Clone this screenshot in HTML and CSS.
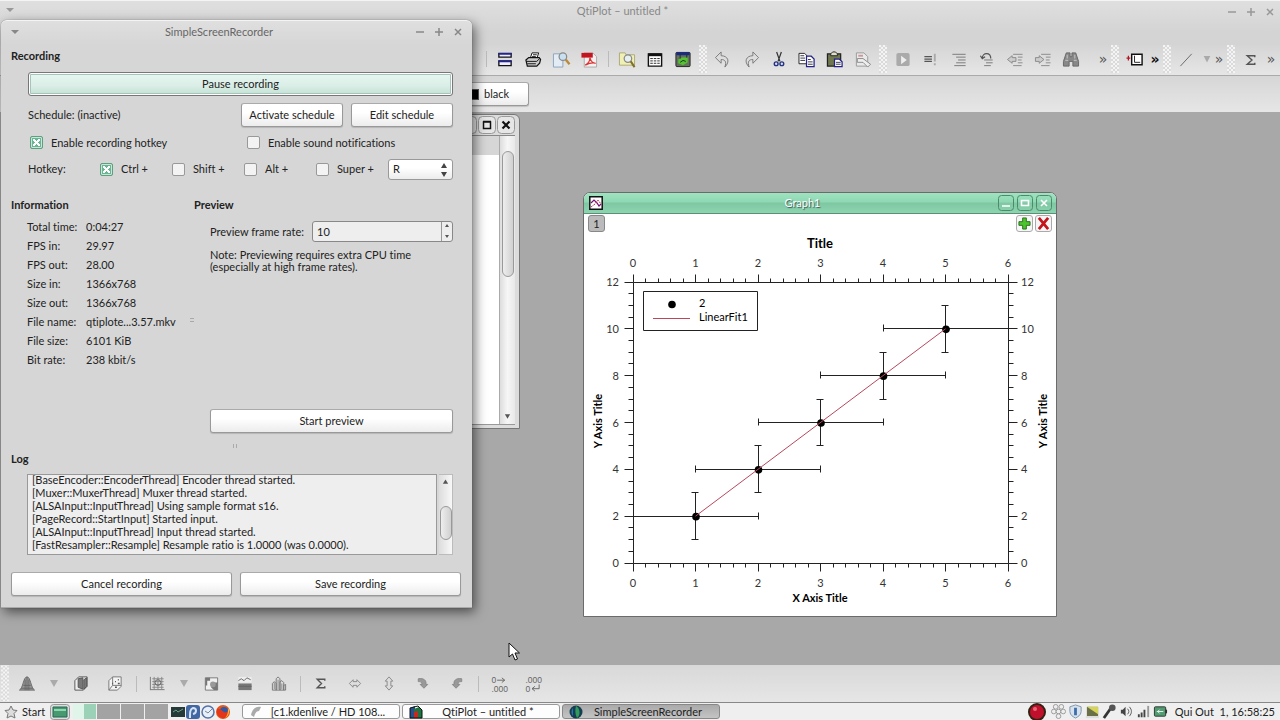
FILE: index.html
```html
<!DOCTYPE html>
<html lang="en">
<head>
    <meta charset="UTF-8">
    <meta name="viewport" content="width=device-width, initial-scale=1.0">
    <title>QtiPlot - untitled *</title>
    <link rel="stylesheet" href="styles.css">
    <script src="plot.js" defer></script>
</head>
<body>
    <div class="titlebar main-title">
        <svg class="arrow" viewBox="0 0 8 6"><path d="M0 1h8L4 5z"/></svg>
        <span class="caption">QtiPlot – untitled *</span>
        <span class="controls">
            <svg viewBox="0 0 10 10"><path d="M1 5h8"/></svg>
            <svg viewBox="0 0 10 10"><path d="M1 5h8M5 1v8"/></svg>
            <svg viewBox="0 0 10 10"><path d="M2 2l6 6M8 2L2 8"/></svg>
        </span>
    </div>

    <div class="toolbar top-tools">
        <span class="sep"></span>
        <svg class="tool" viewBox="0 0 18 18"><path d="M2.5 2.5h13v4h-13zM2.5 10.5h13v5h-13z" fill="#eef" stroke="#111" stroke-width="1.4"/><path d="M2 3h14M2 11h14" stroke="#229" stroke-width="2"/></svg>
        <svg class="tool" viewBox="0 0 18 18"><path d="M6 8l2-6h7l-2 6" fill="#fff" stroke="#111"/><path d="M1.500 9.500l3-2.500h11l1.500 2-1 4-3 3h-10z" fill="#ccc" stroke="#111" stroke-width="1.300"/><path d="M2 11h11l3-3M3 13.500h9M9 4h4M8 6h4" stroke="#111" fill="none"/></svg>
        <svg class="tool" viewBox="0 0 18 18"><path d="M1 3h7l3 3v11H1z" fill="#e3ecf5" stroke="#8aa3bd"/><circle cx="11" cy="6" r="4" fill="#c7e0f2" stroke="#888" stroke-width="1.3"/><path d="M14 9l4 5" stroke="#bb8b3c" stroke-width="2.500"/></svg>
        <svg class="tool" viewBox="0 0 18 18"><path d="M4 2h9l4 4v11H4z" fill="#f4f0f0" stroke="#aaa"/><path d="M1 2h12v5H1z" fill="#c41420"/><path d="M5 15c4-2 5-6 5-8 1 4 3 6 6 6-4-1-7 0-11 2z" fill="none" stroke="#d33" stroke-width="1.300"/></svg>
        <span class="sep"></span>
        <svg class="tool" viewBox="0 0 18 18"><path d="M1 2h6l1 2h9v11H1z" fill="#f0f0b4" stroke="#aaa976"/><circle cx="10" cy="8" r="4" fill="#e6eef0" stroke="#888" stroke-width="1.300"/><path d="M13 11l4 6" stroke="#80702a" stroke-width="2.200"/></svg>
        <svg class="tool" viewBox="0 0 18 18"><path d="M2 3h14v13H2z" fill="#fff" stroke="#111" stroke-width="1.500"/><path d="M2 4h14" stroke="#111" stroke-width="3"/><path d="M4 8h10M4 10.500h10M4 13h10" stroke="#222" stroke-dasharray="2.700 1"/></svg>
        <svg class="tool" viewBox="0 0 18 18"><rect x="1.500" y="1.500" width="15" height="15" rx="1" fill="#66705e" stroke="#222"/><path d="M2 3h14" stroke="#1a2a8a" stroke-width="3"/><path d="M4 9l4-2 6 0v5l-5 3-5-2z" fill="#55c133"/><path d="M6 12l3-2 3 1M6 4v4M13 4v3" stroke="#17351a" fill="none"/></svg>
        <span class="grip"></span>
        <svg class="tool" viewBox="0 0 18 18"><path d="M1 7l6-6v4c7 0 10 6 4 12 2-6 0-8-4-8v4z" fill="#ddd" stroke="#777"/></svg>
        <svg class="tool" viewBox="0 0 18 18"><path d="M17 7l-6-6v4C4 5 1 11 7 17 5 11 7 9 11 9v4z" fill="#ddd" stroke="#777"/></svg>
        <svg class="tool" viewBox="0 0 18 18"><path d="M6.500 1l3.500 10M11.500 1L8 11" stroke="#333" stroke-width="1.300"/><circle cx="6" cy="13.500" r="2" fill="none" stroke="#238" stroke-width="1.500"/><circle cx="12" cy="13.500" r="2" fill="none" stroke="#238" stroke-width="1.500"/></svg>
        <svg class="tool" viewBox="0 0 18 18"><path d="M.500 2.500h6l2 2v9h-8z" fill="#fff" stroke="#222"/><path d="M8.500 5.500h5l3 3v8h-8z" fill="#fff" stroke="#228" stroke-width="1.300"/><path d="M2 5h4M2 7.500h5M2 10h5M10 9h3M10 11.500h5M10 14h5" stroke="#334"/></svg>
        <svg class="tool" viewBox="0 0 18 18"><path d="M1 3h14v13H1z" fill="#6f7650" stroke="#222" stroke-width="1.300"/><path d="M4.500 5V3l2-2h3l2 2v2z" fill="#ddc" stroke="#222"/><path d="M8.500 8.500h5l3 3v5h-8z" fill="#fff" stroke="#228" stroke-width="1.300"/><path d="M10 12h5M10 14h5" stroke="#335"/></svg>
        <svg class="tool" viewBox="0 0 18 18"><path d="M2 2h8l4 4v10H2z" fill="#e9e9e9" stroke="#999"/><path d="M3 8h6l8 6-3 3-5-5H3z" fill="#eee" stroke="#888"/><path d="M4 5h5" stroke="#c99" stroke-width="2"/></svg>
        <span class="grip"></span>
        <svg class="tool" viewBox="0 0 18 18"><rect x="2" y="2" width="14" height="14" rx="2" fill="#aaa"/><path d="M7 5v9l6-4.500z" fill="#eee"/></svg>
        <svg class="tool" viewBox="0 0 18 18"><path d="M2 6h8M2 8.500h8M2 11h8" stroke="#555" stroke-width="1.300"/><path d="M13 3v8M13 13v2" stroke="#aaa" stroke-width="2"/></svg>
        <svg class="tool" viewBox="0 0 18 18"><path d="M2 3.500h14M6 6.500h10M8 9.500h8M6 12.500h10M4 15.500h12" stroke="#777"/></svg>
        <svg class="tool" viewBox="0 0 18 18"><path d="M4 8c0-7 9-7 9 0M2 5l2 3 3-2" fill="none" stroke="#555" stroke-width="1.300"/><path d="M6 9.500h9M8 12.500h7M6 15.500h7" stroke="#777"/></svg>
        <svg class="tool" viewBox="0 0 18 18"><path d="M1 9l5-4v2h4v4H6v2z" fill="#ccc" stroke="#888"/><path d="M7 3.500h10M12 6.500h5M12 9.500h4M12 12.500h5M7 15.500h9" stroke="#888"/></svg>
        <svg class="tool" viewBox="0 0 18 18"><path d="M10 9L5 5v2H1v4h4v2z" fill="#ccc" stroke="#888"/><path d="M7 3.500h10M12 6.500h5M12 9.500h4M12 12.500h5M7 15.500h9" stroke="#888"/></svg>
        <svg class="tool" viewBox="0 0 18 18"><path d="M4 2h4v4h2V2h4l3 9v5h-6v-5H7v5H1v-5z" fill="#888" stroke="#666"/><path d="M3 10h3M12 10h3M5 4v4M13 4v4" stroke="#bbb" stroke-width="1.300"/></svg>
        <span class="more spaced">»</span>
        <span class="grip"></span>
        <svg class="tool" viewBox="0 0 18 18"><path d="M5.500 3.500h11v11h-11z" fill="#fff" stroke="#111" stroke-width="1.500"/><path d="M8.500 5v7h6" fill="none" stroke="#222"/><path d="M0 7.500h4M2 5v5" stroke="#b12" stroke-width="1.300"/></svg>
        <span class="more on">»</span>
        <span class="grip"></span>
        <svg class="tool" viewBox="0 0 18 18"><path d="M2 16L14 3" stroke="#666"/></svg>
        <span class="drop"></span>
        <span class="more">»</span>
        <span class="grip"></span>
        <svg class="tool" viewBox="0 0 18 18"><path d="M13 6.500V5H5l5 4.500L5 14h8v-1.500" fill="none" stroke="#555" stroke-width="1.500"/></svg>
        <span class="more">»</span>
    </div>

    <div class="color-bar">
        <button class="btn color-btn" type="button"><span class="swatch"></span>black</button>
    </div>

    <main class="workspace">
        <section class="table-window">
            <div class="table-title">
                <svg viewBox="0 0 18 18"><rect x=".5" y=".5" width="17" height="17" rx="4"/><path d="M5 13h8" stroke="#111" stroke-width="2"/></svg>
                <svg viewBox="0 0 18 18"><rect x=".5" y=".5" width="17" height="17" rx="4"/><path d="M5.500 6h7v6.500h-7zM5 5.500h8" fill="none" stroke="#111" stroke-width="1.500"/></svg>
                <svg viewBox="0 0 18 18"><rect x=".5" y=".5" width="17" height="17" rx="4"/><path d="M5.500 5.500l7 7M12.500 5.500l-7 7" stroke="#111" stroke-width="2.200"/></svg>
            </div>
            <div class="table-body">
                <div class="cells"><div class="cells-head"></div></div>
                <div class="scroll">
                    <div class="thumb"></div>
                    <svg class="scroll-arrow" viewBox="0 0 8 6"><path d="M1 1h6L4 6z"/></svg>
                </div>
            </div>
        </section>

        <section class="graph-window">
            <div class="graph-title">
                <svg class="graph-icon" viewBox="0 0 14 14"><path d="M.8.800h12.400v12.400H.8z" fill="#fff" stroke="#111" stroke-width="1.500"/><path d="M2 7l3-3 3 3 2 3 2-2" fill="none" stroke="#717" stroke-width="1.200"/><path d="M2 11l4-3 3-4 3 4" fill="none" stroke="#b34" stroke-dasharray="2 1"/></svg>
                <span>Graph1</span>
                <div class="graph-controls">
                    <svg viewBox="0 0 16 16"><rect x=".5" y=".5" width="15" height="15" rx="3"/><path d="M4 11h8"/></svg>
                    <svg viewBox="0 0 16 16"><rect x=".5" y=".5" width="15" height="15" rx="3"/><path d="M4.500 5.500h7v5h-7z"/></svg>
                    <svg viewBox="0 0 16 16"><rect x=".5" y=".5" width="15" height="15" rx="3"/><path d="M5 5l6 6M11 5l-6 6"/></svg>
                </div>
            </div>
            <div class="layer-bar">
                <button class="layer on" type="button">1</button>
                <button class="layer push" type="button" aria-label="Add layer"><svg viewBox="0 0 14 14"><path d="M5 1h4v4h4v4H9v4H5V9H1V5h4z" fill="#4cc42c" stroke="#27691c"/></svg></button>
                <button class="layer" type="button" aria-label="Remove layer"><svg viewBox="0 0 14 14"><path d="M2 1l10 12M12 1L2 13" stroke="#c4141c" stroke-width="3"/></svg></button>
            </div>
            <svg class="plot" id="plot" viewBox="584 234 472 382"></svg>
        </section>

        <svg class="cursor" viewBox="0 0 12 19"><path d="M1 1v14l3.500-3 2.500 6 2.500-1L7 11h4.500z" fill="#fff" stroke="#111"/></svg>
    </main>

    <div class="toolbar bottom-tools">
        <span class="grip"></span>
        <svg class="tool" viewBox="0 0 18 18"><path d="M1 16c4-2 4-14 8-14s4 12 8 14z" fill="#999" stroke="#666"/><path d="M5 11h8M3 14h12M7 5v11M11 5v11M9 2v14" stroke="#666"/></svg>
        <span class="drop"></span>
        <svg class="tool" viewBox="0 0 18 18"><path d="M2.500 6l4-4h9v10l-4 4h-9z" fill="#eee" stroke="#555"/><path d="M6 4l5-1v12l-5-2zM12 5l3-2v9l-3 3z" fill="#777" stroke="#555"/></svg>
        <svg class="tool" viewBox="0 0 18 18"><path d="M2.500 6l4-4h9v10l-4 4h-9zM6.500 2v9l-4 5M6.500 11h9" fill="#f4f4f4" stroke="#777"/><path d="M9 7h1M12 5h1M6 9h1M9 13h2M12 9h2" stroke="#555" stroke-width="1.500"/></svg>
        <span class="sep"></span>
        <svg class="tool" viewBox="0 0 18 18"><path d="M2 2v14M2 15.500h15" stroke="#777" fill="none"/><path d="M4 4h12M4 7h12M4 10h12M4 13h12M6 2v13M10 2v13M14 2v13" stroke="#888"/><circle cx="10" cy="8" r="3" fill="none" stroke="#666"/></svg>
        <span class="drop"></span>
        <svg class="tool" viewBox="0 0 18 18"><path d="M3 3h13v13H3z" fill="#f0f0f0" stroke="#777"/><path d="M3 3h5v3H5v5H3zM9 8h7v8h-4l-3-3z" fill="#777"/><circle cx="11" cy="10" r="3" fill="#999"/></svg>
        <svg class="tool" viewBox="0 0 18 18"><path d="M2 2h14v6H2z" fill="#eee"/><path d="M2 9h14v7H2z" fill="#777"/><path d="M2 6l3-2 3 2 3-3 4 2M2 12h14" fill="none" stroke="#666"/></svg>
        <svg class="tool" viewBox="0 0 18 18"><path d="M2 16V9l2-2 2 2v7M6 16V4l2-2 2 2v12M10 16V7l2-1 2 2v8M14 16v-5l2-1v6H2" fill="#ddd" stroke="#777"/><path d="M4 8v7M8 5v10M12 9v6" stroke="#888"/></svg>
        <span class="sep"></span>
        <svg class="tool" viewBox="0 0 18 18"><path d="M13 6V4.500H5L9.500 9 5 13.500h8V12" fill="none" stroke="#555" stroke-width="1.500"/></svg>
        <svg class="tool" viewBox="0 0 18 18"><path d="M3 9l4-4v2h4V5l4 4-4 4v-2H7v2z" fill="#ddd" stroke="#888"/></svg>
        <svg class="tool" viewBox="0 0 18 18"><path d="M9 2l4 4.500h-2v5h2L9 16l-4-4.500h2v-5H5z" fill="#ddd" stroke="#888"/></svg>
        <svg class="tool" viewBox="0 0 18 18"><path d="M4 4c6-1 9 2 8 6h2l-4 4-4-4h2c0-3-2-3-4-3z" fill="#999" stroke="#888"/></svg>
        <svg class="tool" viewBox="0 0 18 18"><path d="M14 4C8 3 5 6 6 10H4l4 4 4-4h-2c0-3 2-3 4-3z" fill="#999" stroke="#888"/></svg>
        <span class="sep"></span>
        <svg class="tool digits" viewBox="0 0 18 18"><text x="1" y="8">0</text><text x="1" y="18">.000</text><path d="M7 5.500h8M12 3l3 2.500L12 8"/></svg>
        <svg class="tool digits" viewBox="0 0 18 18"><text x="1" y="8">.000</text><text x="1" y="18">0</text><path d="M15.500 10v4.500H8M11 12l-3 2.500 3 2.500"/></svg>
    </div>

    <footer class="taskbar">
        <button class="start" type="button"><svg viewBox="0 0 14 14"><path d="M7 1l2 4 4 .5-3 3 1 4.500-4-2-4 2 1-4.500-3-3L5 5z" fill="#ddd" stroke="#777"/></svg>Start</button>
        <svg class="desk" viewBox="0 0 20 16"><rect x=".5" y=".5" width="19" height="15" rx="3" fill="#ddd" stroke="#999"/><path d="M3 3h14v10H3z" fill="#479a70" stroke="#265"/><path d="M4 5h12v2H4z" fill="#8fd6b1"/></svg>
        <div class="pager"><i class="on"></i><i></i><i></i><i></i></div>
        <div class="quick">
            <svg viewBox="0 0 14 14"><path d="M0 2h14v10H0z" fill="#253a38"/><path d="M2 7l3-2 2 2 5-3" fill="none" stroke="#69a08c"/></svg>
            <svg viewBox="0 0 14 14"><rect width="14" height="14" rx="3" fill="#4268a4"/><path d="M4 13c0-6 0-9 3-10 4 0 4 5 0 6" fill="none" stroke="#d6e3f3" stroke-width="2"/></svg>
            <svg viewBox="0 0 14 14"><circle cx="7" cy="7" r="6" fill="#e9eff8" stroke="#5672a8" stroke-width="1.500"/><path d="M7 8l4-4M7 8L4 6" stroke="#789"/></svg>
            <svg viewBox="0 0 14 14"><circle cx="7" cy="7" r="7" fill="#e2571c"/><circle cx="8" cy="6" r="4" fill="#2f58a8"/><path d="M1 4c2-1 4 1 7 3 2 1 3 0 5-1 0 5-4 8-7 7-4-1-6-5-5-9z" fill="#e3361b"/><path d="M12 3c2 3 1 8-3 10 3-3 3-6 3-10z" fill="#ffbf28"/></svg>
        </div>
        <button class="task" type="button"><svg viewBox="0 0 14 14"><path d="M2 10c1-6 5-9 10-8l-2 4c-3 0-4 3-5 6z" fill="#aaa"/></svg>[c1.kdenlive / HD 108...</button>
        <button class="task" type="button"><svg viewBox="0 0 14 14"><path d="M1 3l5-2v12H1z" fill="#264f8c"/><path d="M5 4l5-2 3 3v8H5z" fill="#1d7342"/><path d="M5 7l4-1v7H5z" fill="#c32b20"/><path d="M1 13V3l8-2 4 4v8z" fill="none" stroke="#111"/></svg>QtiPlot – untitled *</button>
        <button class="task active" type="button"><svg viewBox="0 0 14 14"><circle cx="7" cy="7" r="6.500" fill="#163e50"/><path d="M7 1c4 2 5 9 1 12-2-4-2-8-1-12z" fill="#319b5d"/><path d="M4 3c-2 2-2 6 0 8z" fill="#2476b5"/></svg>SimpleScreenRecorder</button>
        <div class="tray">
            <svg class="rec" viewBox="0 0 18 18"><circle cx="9" cy="9" r="9" fill="#321"/><circle cx="9" cy="9" r="7" fill="#c1102b"/><circle cx="7" cy="6" r="2" fill="#e5697b"/></svg>
            <svg viewBox="0 0 16 16"><g fill="#eee" stroke="#999"><circle cx="5" cy="3" r="2.500"/><circle cx="11" cy="3" r="2.500"/><circle cx="3" cy="8" r="2.500"/><circle cx="8" cy="8" r="2.500"/><circle cx="13" cy="8" r="2.500"/><circle cx="8" cy="13" r="2.500"/></g></svg>
            <svg viewBox="0 0 16 16"><path d="M8 1l6 2v5c0 4-4 6-6 7-2-1-6-3-6-7V3z" fill="#d7e2ed" stroke="#7d93aa"/><path d="M8 4v8" stroke="#3e6fa9" stroke-width="3"/></svg>
            <svg viewBox="0 0 16 16"><path d="M2 3h12v10H2z" fill="#6a7048"/><path d="M2 3l12 8V3z" fill="#d5d458"/><path d="M1 14h14" stroke="#ddd" stroke-width="2"/></svg>
            <svg viewBox="0 0 16 16"><path d="M2 15l7-10" stroke="#333" stroke-width="3"/><circle cx="11" cy="4" r="3.500" fill="#555"/></svg>
            <svg viewBox="0 0 16 16"><path d="M2 6h2l3-3v10l-3-3H2z" fill="#444"/><path d="M9 5c2 2 2 4 0 6M11 3c3 3 3 7 0 10" fill="none" stroke="#555"/></svg>
            <svg viewBox="0 0 16 16"><path d="M3 14v-3M6 14V9M9 14V6" stroke="#444" stroke-width="2"/><path d="M13 14V2" stroke="#999" stroke-width="2"/></svg>
            <svg viewBox="0 0 16 16"><rect x="1.500" y="3" width="12" height="10" rx="1" fill="#4f9c70" stroke="#333"/><path d="M14 6v4" stroke="#333" stroke-width="2"/><path d="M4 8h7M7 6l-2 2 2 2" fill="none" stroke="#eee"/></svg>
            <span class="clock">Qui Out &nbsp;1, 16:58:25</span>
        </div>
    </footer>

    <form class="dialog">
        <div class="titlebar">
            <svg class="arrow" viewBox="0 0 8 6"><path d="M0 1h8L4 5z"/></svg>
            <span class="caption">SimpleScreenRecorder</span>
            <span class="controls">
                <svg viewBox="0 0 10 10"><path d="M1 5h8"/></svg>
                <svg viewBox="0 0 10 10"><path d="M1 5h8M5 1v8"/></svg>
                <svg viewBox="0 0 10 10"><path d="M2 2l6 6M8 2L2 8"/></svg>
            </span>
        </div>
        <div class="dialog-body">
            <h2>Recording</h2>
            <div class="recording">
                <button class="btn pause" type="button">Pause recording</button>
                <div class="row schedule">
                    <span>Schedule: (inactive)</span>
                    <button class="btn" type="button">Activate schedule</button>
                    <button class="btn" type="button">Edit schedule</button>
                </div>
                <div class="row toggles">
                    <label><input type="checkbox" checked>Enable recording hotkey</label>
                    <label><input type="checkbox">Enable sound notifications</label>
                </div>
                <div class="hotkey">
                    <label for="key">Hotkey:</label>
                    <label><input type="checkbox" checked>Ctrl +</label>
                    <label><input type="checkbox">Shift +</label>
                    <label><input type="checkbox">Alt +</label>
                    <label><input type="checkbox">Super +</label>
                    <div class="key-box">
                        <select id="key"><option>R</option></select>
                        <svg viewBox="0 0 6 16"><path d="M0 6l3-5 3 5zM0 10h6l-3 5z"/></svg>
                    </div>
                </div>
            </div>
            <div class="panes">
                <section>
                    <h2>Information</h2>
                    <dl class="info">
                        <dt>Total time:</dt><dd>0:04:27</dd>
                        <dt>FPS in:</dt><dd>29.97</dd>
                        <dt>FPS out:</dt><dd>28.00</dd>
                        <dt>Size in:</dt><dd>1366x768</dd>
                        <dt>Size out:</dt><dd>1366x768</dd>
                        <dt>File name:</dt><dd>qtiplote...3.57.mkv</dd>
                        <dt>File size:</dt><dd>6101 KiB</dd>
                        <dt>Bit rate:</dt><dd>238 kbit/s</dd>
                    </dl>
                </section>
                <div class="splitter"></div>
                <section class="preview">
                    <h2>Preview</h2>
                    <div class="rate">
                        <label for="rate">Preview frame rate:</label>
                        <div class="spin">
                            <input id="rate" type="number" value="10">
                            <svg viewBox="0 0 10 18"><path d="M3 5l2-3 2 3zM3 13h4l-2 3z"/></svg>
                        </div>
                    </div>
                    <p>Note: Previewing requires extra CPU time (especially at high frame rates).</p>
                    <button class="btn" type="button">Start preview</button>
                </section>
            </div>
            <div class="splitter across"></div>
            <h2><label for="log">Log</label></h2>
            <div class="log-box">
                <textarea id="log" readonly>[BaseEncoder::EncoderThread] Encoder thread started.
[Muxer::MuxerThread] Muxer thread started.
[ALSAInput::InputThread] Using sample format s16.
[PageRecord::StartInput] Started input.
[ALSAInput::InputThread] Input thread started.
[FastResampler::Resample] Resample ratio is 1.0000 (was 0.0000).</textarea>
                <div class="log-scroll">
                    <svg class="scroll-arrow" viewBox="0 0 8 6"><path d="M1 5h6L4 0z"/></svg>
                    <div class="thumb"></div>
                </div>
            </div>
            <div class="row actions">
                <button class="btn" type="button">Cancel recording</button>
                <button class="btn" type="button">Save recording</button>
            </div>
        </div>
    </form>
</body>
</html>
```

FILE: plot.js
```js
// plot area in svg units
var left = 633, right = 1008, top_y = 283, bottom = 564;
var svg = document.getElementById("plot");

function px(x){ return left + (right - left) * x / 6; }
function py(y){ return bottom - (bottom - top_y) * y / 12; }
function snap(v){ return Math.floor(v) + 0.5; }

function add(name, attrs, text){
    var el = document.createElementNS("http://www.w3.org/2000/svg", name);
    for(var k in attrs) el.setAttribute(k, attrs[k]);
    if(text !== undefined) el.textContent = text;
    svg.appendChild(el);
}
function line(x1, y1, x2, y2){
    add("path", {d: "M" + snap(x1) + " " + snap(y1) + "L" + snap(x2) + " " + snap(y2), class: "ink"});
}

// frame
add("path", {d: "M633.5 283.500H1008.500V564.500H633.500z", class: "ink"});

// x axes, five minor steps for each unit
for(var i = 0; i <= 30; i++){
    var x = px(i / 5), len = i % 5 ? 4 : 8;
    line(x, top_y - len, x, top_y);
    line(x, bottom, x, bottom + len);
    if(i % 5 == 0){
        add("text", {x: x, y: 268, class: "tick mid"}, i / 5);
        add("text", {x: x, y: 588, class: "tick mid"}, i / 5);
    }
}
// y axes
for(var j = 0; j <= 24; j++){
    var y = py(j / 2), size = j % 4 ? 5 : 9;
    line(left - size, y, left, y);
    line(right, y, right + size, y);
    if(j % 4 == 0){
        add("text", {x: 619, y: y + 4, class: "tick end"}, j / 2);
        add("text", {x: 1021, y: y + 4, class: "tick"}, j / 2);
    }
}

add("text", {x: 820, y: 249, class: "plot-title"}, "Title");
add("text", {x: 820, y: 603, class: "axis-title"}, "X Axis Title");
add("text", {transform: "translate(602 422) rotate(-90)", class: "axis-title"}, "Y Axis Title");
add("text", {transform: "translate(1047 422) rotate(-90)", class: "axis-title"}, "Y Axis Title");

// data with error bars of 1 on both sides
for(var n = 1; n <= 5; n++){
    var cx = px(n), cy = py(2 * n);
    line(px(n - 1), cy, px(n + 1), cy);
    line(px(n - 1), cy - 4, px(n - 1), cy + 3);
    line(px(n + 1), cy - 4, px(n + 1), cy + 3);
    line(cx, py(2 * n - 1), cx, py(2 * n + 1));
    line(cx - 4, py(2 * n - 1), cx + 3, py(2 * n - 1));
    line(cx - 4, py(2 * n + 1), cx + 3, py(2 * n + 1));
    add("circle", {cx: cx + 0.5, cy: cy + 0.5, r: 3.8});
}
add("path", {d: "M" + px(1) + " " + py(2) + "L" + px(5) + " " + py(10), class: "fit"});

// legend
add("path", {d: "M643.500 292.500H757.500V331.500H643.500z", class: "ink"});
add("circle", {cx: 672, cy: 305.500, r: 3.8});
add("path", {d: "M653 319.500H690", class: "fit"});
add("text", {x: 699, y: 308, class: "legend"}, "2");
add("text", {x: 699, y: 322, class: "legend"}, "LinearFit1");

var log = document.getElementById("log");
log.scrollTop = log.scrollHeight;
```

FILE: styles.css
```css
*{
    box-sizing: border-box;
}
body{
    margin: 0;
    height: 100vh;
    display: flex;
    flex-direction: column;
    overflow: hidden;
    position: relative;
    background-color: #d6d6d6;
    color: #222;
    font-family: Lato, "Open Sans", sans-serif;
    font-size: 11px;
    line-height: 14px;
    font-variant-ligatures: none;
}
button, input, select, textarea{
    font: inherit;
    font-variant-ligatures: none;
    color: inherit;
    margin: 0;
}
svg{
    display: block;
    flex: none;
}
h2{
    margin: 0;
    font-size: 11px;
    line-height: 14px;
    font-weight: bold;
}

/* title bars */
.titlebar{
    display: flex;
    align-items: center;
    height: 21px;
    padding: 0 9px 0 10px;
    color: #666;
}
.titlebar .arrow{
    width: 8px;
    height: 6px;
    fill: #888;
}
.caption{
    flex: 1;
    text-align: center;
    padding-left: 4px;
}
.controls{
    display: flex;
    gap: 9px;
}
.controls svg{
    width: 10px;
    height: 10px;
    stroke: #888;
    stroke-width: 1.5;
}
.main-title{
    flex: none;
    height: 45px;
    padding: 0 5px 0 6px;
    align-items: flex-start;
    border-top: 1px solid #f4f4f4;
    background: linear-gradient(#dfdfdf, #d4d4d4 70%);
    color: #888;
    line-height: 20px;
}
.main-title .arrow, .main-title .controls{
    margin-top: 6px;
    opacity: 0.8;
}

/* toolbars */
.toolbar{
    flex: none;
    display: flex;
    align-items: center;
}
.top-tools{
    height: 31px;
    padding-left: 481px;
    padding-bottom: 2px;
    border-bottom: 1px solid #aaa;
    background: linear-gradient(#d5d5d5, #e6e6e6);
}
.bottom-tools{
    height: 37px;
    background: linear-gradient(#d8d8d8, #e6e6e6);
}
.tool{
    width: 28px;
    height: 17px;
}
.bottom-tools .tool{
    width: 34px;
}
.sep{
    flex: none;
    width: 10px;
    height: 16px;
    background: linear-gradient(#bbb, #bbb) center / 1px 100% no-repeat;
}
.bottom-tools .sep{
    width: 8px;
}
.grip{
    flex: none;
    width: 12px;
    height: 28px;
    padding: 0 2px;
    background: repeating-conic-gradient(#f4f4f4 0 25%, #dadada 0 50%) center / 4px 4px content-box;
}
.bottom-tools .grip{
    width: 10px;
    height: 37px;
    padding: 0 1px;
}
.more{
    flex: none;
    width: 12px;
    text-align: center;
    font-family: "DejaVu Sans", sans-serif;
    font-size: 14px;
    color: #555;
}
.more.on{
    color: #111;
    font-weight: bold;
}
.more.spaced{
    margin-left: 12px;
}
.drop{
    flex: none;
    width: 12px;
    height: 7px;
    background: #aaa;
    clip-path: polygon(20% 0, 80% 0, 50% 100%);
}
.bottom-tools .drop{
    width: 20px;
    clip-path: polygon(30% 0, 70% 0, 50% 100%);
}
.digits{
    font-family: "Liberation Sans", sans-serif;
    font-size: 9px;
    fill: #666;
    overflow: visible;
}
.digits path{
    fill: none;
    stroke: #666;
}
.color-bar{
    flex: none;
    height: 36px;
    padding: 6px 0 0 409px;
    background: linear-gradient(#d6d6d6, #e6e6e6);
}

.btn{
    height: 24px;
    padding: 0 7px;
    border: 1px solid #999;
    border-top-color: #aaa;
    border-radius: 3px;
    background: linear-gradient(#fff 40%, #ececec);
    box-shadow: 0 1px 1px rgba(0, 0, 0, 0.15);
}
.color-btn{
    display: flex;
    align-items: center;
    gap: 5px;
    width: 120px;
    padding-left: 58px;
}
.swatch{
    width: 11px;
    height: 11px;
    background: #000;
    border: 1px solid #555;
}

/* workspace with its child windows */
.workspace{
    flex: 1;
    min-height: 0;
    position: relative;
    background-color: #a8a8a8;
}
.table-window{
    position: absolute;
    left: 300px;
    top: 2px;
    width: 220px;
    height: 315px;
    display: flex;
    flex-direction: column;
    padding: 0 4px 3px 0;
    border: 1px solid #777;
    border-radius: 0 6px 0 0;
    background: #dcdcdc;
}
.table-title{
    flex: none;
    display: flex;
    justify-content: flex-end;
    align-items: center;
    gap: 1px;
    height: 21px;
    border-bottom: 1px solid #888;
}
.table-title svg{
    width: 18px;
    height: 18px;
}
.table-title rect{
    fill: #e6e6e6;
    stroke: #999;
}
.table-body{
    flex: 1;
    display: flex;
    border-bottom: 1px solid #999;
}
.cells{
    flex: 1;
    background: #fff;
    border-right: 1px solid #aaa;
}
.cells-head{
    height: 19px;
    background: #d6d6d6;
}
.scroll{
    width: 15px;
    display: flex;
    flex-direction: column;
    justify-content: space-between;
    align-items: center;
    padding: 15px 0 5px;
    background: linear-gradient(90deg, #ddd, #f6f6f6 50%, #e8e8e8);
}
.thumb{
    width: 12px;
    height: 126px;
    border: 1px solid #999;
    border-radius: 6px;
    background: linear-gradient(90deg, #eee, #d0d0d0);
}
.scroll-arrow{
    width: 7px;
    height: 6px;
    fill: #555;
}

.graph-window{
    position: absolute;
    left: 583px;
    top: 80px;
    width: 474px;
    border: 1px solid #6b6b6b;
    border-radius: 7px 7px 0 0;
    background: #fff;
    overflow: hidden;
    padding-bottom: 1px;
}
.graph-title{
    display: flex;
    align-items: center;
    justify-content: space-between;
    height: 21px;
    padding: 0 4px 0 5px;
    border-bottom: 1px solid #5c8f75;
    background: linear-gradient(#9fe3c1, #8ed8b3 45%, #7fc7a3 50%, #8dd5b0);
    color: #fff;
    text-shadow: 1px 1px 1px #355;
}
.graph-title span{
    padding-left: 4px;
}
.graph-icon{
    width: 14px;
    height: 14px;
}
.graph-controls{
    display: flex;
    gap: 3px;
}
.graph-controls svg{
    width: 16px;
    height: 16px;
    fill: none;
    stroke: #fff;
    stroke-width: 1.6;
}
.graph-controls rect{
    stroke: #4b8a6a;
    stroke-width: 1;
}
.layer-bar{
    display: flex;
    gap: 2px;
    height: 19px;
    padding: 1px 4px;
}
.layer{
    display: flex;
    align-items: center;
    justify-content: center;
    width: 17px;
    height: 17px;
    padding: 0;
    border: 1px solid #aaa;
    border-radius: 3px;
    background: #f6f6f6;
}
.layer svg{
    width: 13px;
    height: 13px;
}
.layer.on{
    background: #bbb;
    border-color: #888;
}
.layer.push{
    margin-left: auto;
}
.plot{
    width: 100%;
    height: auto;
}
.ink{
    fill: none;
    stroke: #222;
}
.fit{
    fill: none;
    stroke: #b8485c;
}
.tick{
    font-size: 11px;
    fill: #333;
}
.mid, .plot-title, .axis-title{
    text-anchor: middle;
}
.end{
    text-anchor: end;
}
.legend{
    font-size: 11px;
}
.plot-title{
    font-size: 13px;
    font-weight: bold;
}
.axis-title{
    font-size: 11px;
    font-weight: bold;
}
.cursor{
    position: absolute;
    left: 508px;
    top: 530px;
    width: 12px;
    height: 19px;
}

/* taskbar */
.taskbar{
    flex: none;
    display: flex;
    align-items: center;
    height: 18px;
    padding: 0 5px 0 4px;
    border-top: 1px solid #888;
    background: #efefef;
}
.start{
    display: flex;
    align-items: center;
    gap: 4px;
    width: 46px;
    padding: 0;
    border: none;
    background: none;
}
.start svg, .quick svg, .task svg{
    width: 14px;
    height: 14px;
}
.desk{
    width: 20px;
    height: 16px;
}
.pager{
    display: flex;
    gap: 1px;
    width: 95px;
    height: 15px;
    margin: 0 3px;
}
.pager i{
    flex: 1;
    background: #a3a3a3;
}
.pager .on{
    background: linear-gradient(90deg, #e0f5ea 50%, #9bd1b6 50%);
}
.quick{
    display: flex;
    gap: 1px;
    width: 71px;
}
.task{
    flex: none;
    display: flex;
    align-items: center;
    justify-content: center;
    gap: 4px;
    width: 158px;
    height: 15px;
    margin-right: 2px;
    padding: 0 6px;
    border: 1px solid #999;
    border-radius: 3px;
    background: #fdfdfd;
    white-space: nowrap;
}
.task svg{
    margin-right: auto;
}
.task:after{
    content: "";
    margin-left: auto;
}
.task.active{
    background: linear-gradient(#aaa, #c4c4c4);
    border-color: #888;
}
.tray{
    display: flex;
    align-items: center;
    gap: 2px;
    margin-left: auto;
}
.tray svg{
    width: 15px;
    height: 15px;
}
.tray .rec{
    width: 18px;
    height: 18px;
    margin-right: 3px;
}
.clock{
    margin-left: 5px;
}

/* recorder dialog */
.dialog{
    position: absolute;
    left: 1px;
    top: 20px;
    width: 471px;
    border-top: 1px solid #f4f4f4;
    border-bottom: 1px solid #aaa;
    border-radius: 6px 6px 0 0;
    background: linear-gradient(#dfdfdf, #d6d6d6 24px);
    box-shadow: 3px 4px 12px rgba(0, 0, 0, 0.55), 0 0 1px #555;
}
.dialog-body{
    display: flex;
    flex-direction: column;
    padding: 7px 11px 11px 10px;
}
.recording{
    display: flex;
    flex-direction: column;
    gap: 7px;
    padding: 9px 8px 0 17px;
}
.row{
    display: flex;
    align-items: center;
}
.pause{
    border-color: #777;
    background: linear-gradient(#e8f6f1, #d9eee6 60%, #c2e0d4);
    box-shadow: inset 0 0 0 1px #fff, inset 0 0 0 2px #a7c4b9;
}
.schedule{
    gap: 8px;
}
.schedule span{
    flex: 1;
}
.schedule .btn{
    width: 102px;
}
label{
    display: flex;
    align-items: center;
    white-space: nowrap;
}
input[type=checkbox]{
    appearance: none;
    width: 13px;
    height: 13px;
    margin-right: 8px;
    border: 1px solid #999;
    border-radius: 2px;
    background: #f3f3f3;
}
input[type=checkbox]:checked{
    border-color: #5f9f80;
    background:
        linear-gradient(45deg, transparent 40%, #fff 40% 60%, transparent 60%) center / 7px 7px no-repeat,
        linear-gradient(-45deg, transparent 40%, #fff 40% 60%, transparent 60%) center / 7px 7px no-repeat,
        #6bb592;
    box-shadow: inset 0 0 0 1px #c4e9d8;
}
.toggles{
    height: 17px;
    padding-left: 2px;
}
.toggles label{
    flex: none;
    width: 217px;
}
.hotkey{
    display: grid;
    grid-template-columns: repeat(5, 72px) 1fr;
    align-items: center;
    height: 22px;
}
.key-box{
    position: relative;
}
.key-box select{
    display: block;
    appearance: none;
    width: 100%;
    height: 21px;
    padding: 0 4px;
    border: 1px solid #999;
    border-radius: 3px;
    background: linear-gradient(#fff 40%, #ececec);
}
.key-box svg{
    position: absolute;
    right: 6px;
    top: 3px;
    width: 6px;
    height: 16px;
    fill: #444;
    pointer-events: none;
}
.panes{
    display: flex;
    height: 235px;
    margin-top: 18px;
}
.info{
    display: grid;
    grid-template-columns: 59px 104px;
    grid-auto-rows: 19px;
    align-items: center;
    margin: 5px 0 0 16px;
}
.info dd{
    margin: 0;
}
.splitter{
    width: 4px;
    height: 6px;
    margin-top: 120px;
    background: repeating-linear-gradient(#aaa 0 1px, transparent 1px 3px);
}
.splitter.across{
    width: 6px;
    height: 4px;
    margin: 11px auto 4px;
    background: repeating-linear-gradient(90deg, #aaa 0 1px, transparent 1px 3px);
}
.preview{
    flex: 1;
    display: flex;
    flex-direction: column;
    padding-right: 8px;
}
.preview .rate, .preview p, .preview .btn{
    margin-left: 16px;
}
.rate{
    display: flex;
    align-items: center;
    justify-content: space-between;
    margin-top: 9px;
}
.spin{
    width: 141px;
    display: flex;
    height: 21px;
    border: 1px solid #888;
    border-radius: 3px;
    background: #eee;
}
.spin input{
    flex: 1;
    min-width: 0;
    padding: 0 4px;
    border: none;
    border-right: 1px solid #999;
    background: none;
    outline: none;
    appearance: textfield;
}
.spin input::-webkit-inner-spin-button{
    display: none;
}
.spin svg{
    width: 10px;
    height: 18px;
    fill: #555;
}
.preview p{
    margin-top: 7px;
    margin-bottom: auto;
    line-height: 12px;
    width: 215px;
}
.log-box{
    display: flex;
    gap: 2px;
    margin: 8px 8px 17px 16px;
    height: 81px;
}
.log-box textarea{
    flex: 1;
    padding: 3px 4px;
    border: 1px solid #999;
    background: #eee;
    line-height: 13px;
    resize: none;
    overflow: hidden;
    outline: none;
    white-space: pre;
}
.log-scroll{
    width: 14px;
    display: flex;
    flex-direction: column;
    align-items: center;
    gap: 21px;
    padding-top: 4px;
    border: 1px solid #bbb;
    border-width: 1px 1px 1px 0;
    background: linear-gradient(90deg, #ddd, #f8f8f8);
}
.log-scroll .thumb{
    height: 34px;
}
.actions{
    gap: 8px;
}
.actions .btn{
    flex: 1;
}
```
